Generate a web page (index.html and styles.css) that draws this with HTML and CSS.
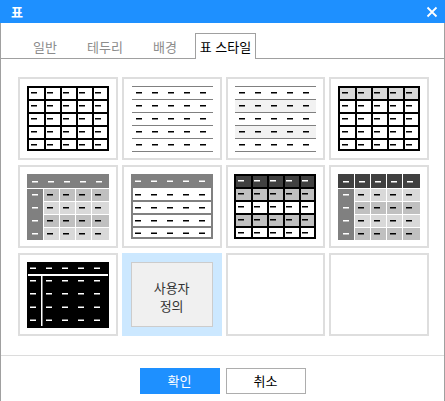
FILE: index.html
```html
<!DOCTYPE html>
<html lang="ko">
<head>
<meta charset="utf-8">
<title>표</title>
<link rel="stylesheet" href="styles.css">
</head>
<body>
<div class="dialog">
  <div class="titlebar">
    <span class="title">표</span>
    <svg class="close" width="12" height="12" viewBox="0 0 12 12"><path d="M1.5 1.5L10.5 10.5M10.5 1.5L1.5 10.5" stroke="#fff" stroke-width="1.8" fill="none"/></svg>
  </div>
  <div class="main">
    <div class="tabs">
      <div class="tab">일반</div>
      <div class="tab">테두리</div>
      <div class="tab">배경</div>
      <div class="tab active">표 스타일</div>
    </div>
    <div class="grid">
      <!-- 1 -->
      <div class="card">
        <svg class="thumb" width="82" height="66" viewBox="0 0 82 66">
          <rect x="1" y="1" width="80" height="63" fill="#fff" stroke="#000" stroke-width="2"/>
          <path d="M18 0V65M34 0V65M50 0V65M66 0V65M0 14H82M0 27H82M0 40H82M0 53H82" stroke="#000" stroke-width="2"/>
          <path d="M4 6.75h6M20 6.75h6M36 6.75h6M52 6.75h6M68 6.75h6M4 19.75h6M20 19.75h6M36 19.75h6M52 19.75h6M68 19.75h6M4 32.75h6M20 32.75h6M36 32.75h6M52 32.75h6M68 32.75h6M4 45.75h6M20 45.75h6M36 45.75h6M52 45.75h6M68 45.75h6M4 58.75h6M20 58.75h6M36 58.75h6M52 58.75h6M68 58.75h6" stroke="#000" stroke-width="1.5"/>
        </svg>
      </div>
      <!-- 2 -->
      <div class="card">
        <svg class="thumb" width="82" height="66" viewBox="0 0 82 66">
          <path d="M1 0.5H82M1 13.5H82M1 26.5H82M1 39.5H82M1 52.5H82M1 65.5H82" stroke="#808080" stroke-width="1"/>
          <path d="M5 6.75h6M21 6.75h6M37 6.75h6M53 6.75h6M69 6.75h6M5 19.75h6M21 19.75h6M37 19.75h6M53 19.75h6M69 19.75h6M5 32.75h6M21 32.75h6M37 32.75h6M53 32.75h6M69 32.75h6M5 45.75h6M21 45.75h6M37 45.75h6M53 45.75h6M69 45.75h6M5 58.75h6M21 58.75h6M37 58.75h6M53 58.75h6M69 58.75h6" stroke="#000" stroke-width="1.5"/>
        </svg>
      </div>
      <!-- 3 -->
      <div class="card">
        <svg class="thumb" width="82" height="66" viewBox="0 0 82 66">
          <rect x="1" y="14" width="81" height="12" fill="#f2f2f2"/>
          <rect x="1" y="40" width="81" height="12" fill="#f2f2f2"/>
          <path d="M1 0.5H82M1 13.5H82M1 26.5H82M1 39.5H82M1 52.5H82M1 65.5H82" stroke="#808080" stroke-width="1"/>
          <path d="M5 6.75h6M21 6.75h6M37 6.75h6M53 6.75h6M69 6.75h6M5 19.75h6M21 19.75h6M37 19.75h6M53 19.75h6M69 19.75h6M5 32.75h6M21 32.75h6M37 32.75h6M53 32.75h6M69 32.75h6M5 45.75h6M21 45.75h6M37 45.75h6M53 45.75h6M69 45.75h6M5 58.75h6M21 58.75h6M37 58.75h6M53 58.75h6M69 58.75h6" stroke="#000" stroke-width="1.5"/>
        </svg>
      </div>
      <!-- 4 -->
      <div class="card">
        <svg class="thumb" width="82" height="66" viewBox="0 0 82 66">
          <rect x="1" y="1" width="80" height="63" fill="#fff" stroke="#000" stroke-width="2"/>
          <rect x="2" y="2" width="78" height="11" fill="#d9d9d9"/>
          <path d="M18 0V65M34 0V65M50 0V65M66 0V65M0 14H82M0 27H82M0 40H82M0 53H82" stroke="#000" stroke-width="2"/>
          <path d="M4 6.75h6M20 6.75h6M36 6.75h6M52 6.75h6M68 6.75h6M4 19.75h6M20 19.75h6M36 19.75h6M52 19.75h6M68 19.75h6M4 32.75h6M20 32.75h6M36 32.75h6M52 32.75h6M68 32.75h6M4 45.75h6M20 45.75h6M36 45.75h6M52 45.75h6M68 45.75h6M4 58.75h6M20 58.75h6M36 58.75h6M52 58.75h6M68 58.75h6" stroke="#000" stroke-width="1.5"/>
        </svg>
      </div>
      <!-- 5 -->
      <div class="card">
        <svg class="thumb" width="82" height="66" viewBox="0 0 82 66">
          <rect x="0" y="0" width="82" height="14" fill="#808080"/>
          <rect x="0" y="15" width="82" height="12" fill="#c0c0c0"/>
          <rect x="0" y="28" width="82" height="12" fill="#d9d9d9"/>
          <rect x="0" y="41" width="82" height="12" fill="#c0c0c0"/>
          <rect x="0" y="54" width="82" height="12" fill="#d9d9d9"/>
          <rect x="0" y="15" width="16" height="51" fill="#808080"/>
          <path d="M16.5 14V66M32.5 14V66M48.5 14V66M64.5 14V66" stroke="#fff" stroke-width="1"/>
          <path d="M5 7.75h6M21 7.75h6M37 7.75h6M53 7.75h6M69 7.75h6M5 20.75h6M5 33.75h6M5 46.75h6M5 59.75h6" stroke="#fff" stroke-width="1.5"/>
          <path d="M20 20.75h6M36 20.75h6M52 20.75h6M68 20.75h6M20 33.75h6M36 33.75h6M52 33.75h6M68 33.75h6M20 46.75h6M36 46.75h6M52 46.75h6M68 46.75h6M20 59.75h6M36 59.75h6M52 59.75h6M68 59.75h6" stroke="#000" stroke-width="1.5"/>
        </svg>
      </div>
      <!-- 6 -->
      <div class="card">
        <svg class="thumb" width="82" height="66" viewBox="0 0 82 66">
          <rect x="1" y="1" width="80" height="63" fill="#fff" stroke="#808080" stroke-width="2"/>
          <rect x="0" y="0" width="82" height="14" fill="#808080"/>
          <path d="M0 27H82M0 40H82M0 53H82" stroke="#808080" stroke-width="2"/>
          <path d="M4 7.25h6M20 7.25h6M36 7.25h6M52 7.25h6M68 7.25h6" stroke="#fff" stroke-width="1.5"/>
          <path d="M4 20.75h6M20 20.75h6M36 20.75h6M52 20.75h6M68 20.75h6M4 33.75h6M20 33.75h6M36 33.75h6M52 33.75h6M68 33.75h6M4 46.75h6M20 46.75h6M36 46.75h6M52 46.75h6M68 46.75h6M4 59.25h6M20 59.25h6M36 59.25h6M52 59.25h6M68 59.25h6" stroke="#000" stroke-width="1.5"/>
        </svg>
      </div>
      <!-- 7 -->
      <div class="card">
        <svg class="thumb" width="82" height="66" viewBox="0 0 82 66">
          <rect x="1" y="1" width="80" height="63" fill="#fff" stroke="#000" stroke-width="2"/>
          <rect x="2" y="2" width="78" height="12" fill="#404040"/>
          <rect x="2" y="14" width="78" height="13" fill="#c0c0c0"/>
          <rect x="2" y="40" width="78" height="13" fill="#c0c0c0"/>
          <path d="M18 0V65M34 0V65M50 0V65M66 0V65M0 14H82M0 27H82M0 40H82M0 53H82" stroke="#000" stroke-width="2"/>
          <path d="M4 6.75h6M20 6.75h6M36 6.75h6M52 6.75h6M68 6.75h6" stroke="#fff" stroke-width="1.5"/>
          <path d="M4 19.75h6M20 19.75h6M36 19.75h6M52 19.75h6M68 19.75h6M4 32.75h6M20 32.75h6M36 32.75h6M52 32.75h6M68 32.75h6M4 45.75h6M20 45.75h6M36 45.75h6M52 45.75h6M68 45.75h6M4 58.75h6M20 58.75h6M36 58.75h6M52 58.75h6M68 58.75h6" stroke="#000" stroke-width="1.5"/>
        </svg>
      </div>
      <!-- 8 -->
      <div class="card">
        <svg class="thumb" width="82" height="66" viewBox="0 0 82 66">
          <rect x="0" y="0" width="82" height="14" fill="#404040"/>
          <rect x="0" y="15" width="82" height="12" fill="#d9d9d9"/>
          <rect x="0" y="28" width="82" height="12" fill="#c0c0c0"/>
          <rect x="0" y="41" width="82" height="12" fill="#d9d9d9"/>
          <rect x="0" y="54" width="82" height="12" fill="#c0c0c0"/>
          <rect x="0" y="15" width="16" height="51" fill="#808080"/>
          <path d="M16.5 0V66M32.5 0V66M48.5 0V66M64.5 0V66" stroke="#fff" stroke-width="1"/>
          <path d="M5 7.75h6M21 7.75h6M37 7.75h6M53 7.75h6M69 7.75h6M5 20.75h6M5 33.75h6M5 46.75h6M5 59.75h6" stroke="#fff" stroke-width="1.5"/>
          <path d="M20 20.75h6M36 20.75h6M52 20.75h6M68 20.75h6M20 33.75h6M36 33.75h6M52 33.75h6M68 33.75h6M20 46.75h6M36 46.75h6M52 46.75h6M68 46.75h6M20 59.75h6M36 59.75h6M52 59.75h6M68 59.75h6" stroke="#000" stroke-width="1.5"/>
        </svg>
      </div>
      <!-- 9 -->
      <div class="card">
        <svg class="thumb" width="82" height="66" viewBox="0 0 82 66">
          <rect x="0" y="0" width="82" height="66" fill="#000"/>
          <path d="M1 13H81" stroke="#fff" stroke-width="2"/>
          <path d="M14.75 14V64" stroke="#fff" stroke-width="1.5"/>
          <path d="M3 6.25h6M19 6.25h6M35 6.25h6M51 6.25h6M67 6.25h6M3 18.75h6M19 18.75h6M35 18.75h6M51 18.75h6M67 18.75h6M3 31.75h6M19 31.75h6M35 31.75h6M51 31.75h6M67 31.75h6M3 45.25h6M19 45.25h6M35 45.25h6M51 45.25h6M67 45.25h6M3 58.25h6M19 58.25h6M35 58.25h6M51 58.25h6M67 58.25h6" stroke="#fff" stroke-width="1.5"/>
        </svg>
      </div>
      <!-- 10 -->
      <div class="card selected">
        <div class="custom">사용자<br>정의</div>
      </div>
      <div class="card"></div>
      <div class="card"></div>
    </div>
    <div class="separator"></div>
    <div class="footer">
      <button class="btn primary">확인</button>
      <button class="btn">취소</button>
    </div>
  </div>
</div>
</body>
</html>
```

FILE: styles.css
```css
* { box-sizing: border-box; }
html, body {
  margin: 0;
  padding: 0;
  background: #fff;
  overflow: hidden;
}
body {
  font-family: "Noto Sans CJK KR", "Noto Sans", sans-serif;
  font-size: 13px;
  color: #000;
}
.dialog {
  width: 445px;
  height: 401px;
  display: flex;
  flex-direction: column;
}
.titlebar {
  height: 23px;
  flex: none;
  background: #1e90ff;
  display: flex;
  align-items: center;
  justify-content: space-between;
  padding: 0 7px 0 11px;
  color: #fff;
}
.title {
  font-weight: bold;
  font-size: 13px;
  line-height: 23px;
}
.close { display: block; }
.main {
  flex: 1;
  border-left: 1px solid #a0a0a0;
  border-right: 1px solid #a0a0a0;
  display: flex;
  flex-direction: column;
}
.tabs {
  height: 36px;
  flex: none;
  border-bottom: 1px solid #a0a0a0;
  display: flex;
  align-items: flex-end;
  padding-left: 14px;
}
.tab {
  width: 60px;
  height: 25px;
  text-align: center;
  line-height: 27px;
  color: #8c8c8c;
}
.tab.active {
  width: 61px;
  height: 26px;
  margin-bottom: -1px;
  border: 1px solid #a0a0a0;
  border-bottom: none;
  background: #fff;
  color: #000;
  line-height: 26px;
}
.grid {
  margin: 18px 0 0 17px;
  width: 411px;
  display: grid;
  grid-template-columns: repeat(4, 1fr);
  grid-template-rows: repeat(3, 83px);
  gap: 5px 4px;
}
.card {
  border: 2px solid #dedede;
  display: flex;
  justify-content: center;
  align-items: flex-start;
  padding-top: 7px;
}
.thumb { display: block; }
.card.selected {
  background: #cce8ff;
  border-color: #cce8ff;
}
.custom {
  width: 82px;
  height: 65px;
  background: #f0f0f0;
  border: 1px solid #cccccc;
  color: #333;
  font-size: 13px;
  line-height: 18px;
  text-align: center;
  display: flex;
  align-items: center;
  justify-content: center;
  padding-top: 5px;
}
.separator {
  margin-top: 19px;
  height: 1px;
  background: #dcdcdc;
}
.footer {
  display: flex;
  justify-content: center;
  gap: 6px;
  padding-top: 12px;
}
.btn {
  width: 80px;
  height: 26px;
  border: 1px solid #adadad;
  background: #fff;
  color: #000;
  font-family: "Noto Sans CJK KR", "Noto Sans", sans-serif;
  font-size: 13px;
  padding: 0;
  line-height: 24px;
}
.btn.primary {
  background: #1e90ff;
  border-color: #1e90ff;
  color: #fff;
}
```
